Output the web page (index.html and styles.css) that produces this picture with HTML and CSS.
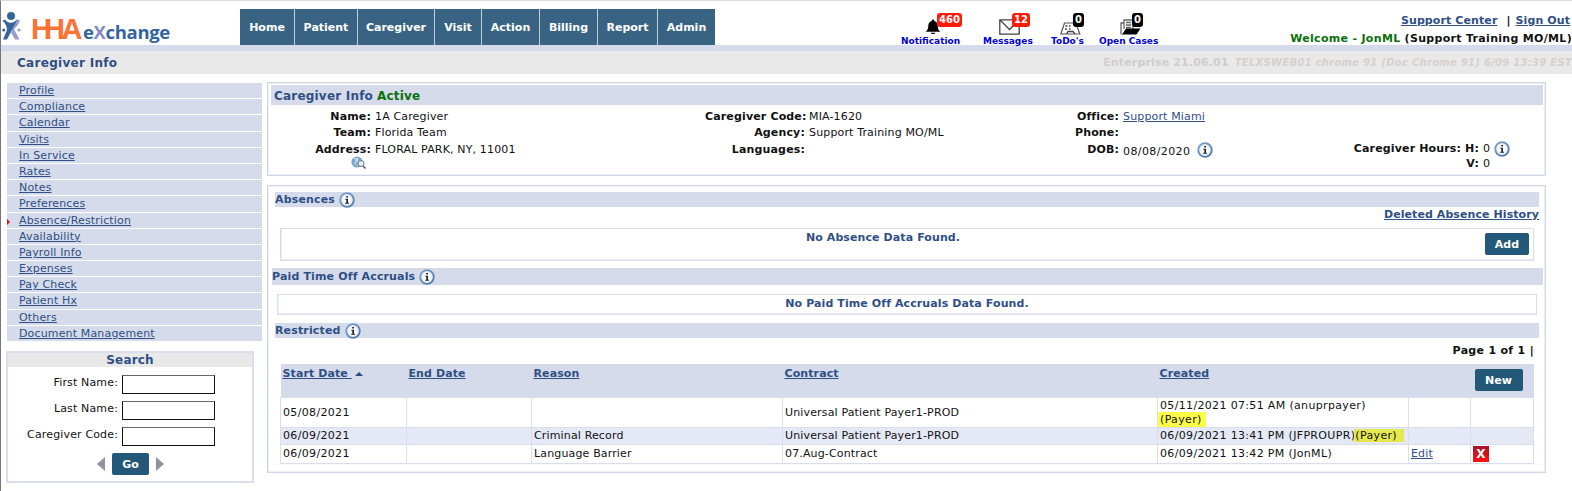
FILE: index.html
```html
<!DOCTYPE html>
<html lang="en">
  <head>
    <meta charset="UTF-8" />
    <meta name="viewport" content="width=device-width, initial-scale=1.0" />
    <title>Caregiver Info</title>
    <link rel="stylesheet" href="styles.css">
  </head>
  <body>
    <svg class="defs" width="0" height="0">
      <defs>
        <linearGradient id="infoRing" x1="0" y1="0" x2="1" y2="1">
          <stop offset="0" stop-color="#7fa3cc" />
          <stop offset="1" stop-color="#4d74a3" />
        </linearGradient>
        <radialGradient id="infoFill">
          <stop offset="0.4" stop-color="#ffffff" />
          <stop offset="1" stop-color="#d3e2f2" />
        </radialGradient>
        <symbol id="info" viewBox="0 0 16 16">
          <circle cx="8" cy="8" r="6.8" fill="url(#infoFill)" stroke="url(#infoRing)" stroke-width="1.8" />
          <path d="M7.2 4h1.8v1.6H7.2zM6.3 6.7H9v4h1v1H6.2v-1h1.1V7.7h-1z" fill="#222" />
        </symbol>
      </defs>
    </svg>

    <header class="header">
      <svg class="logo" width="172" height="35" viewBox="0 10 172 35">
        <circle cx="10" cy="16" r="4" fill="#33659c" />
        <path d="M1.500 20.500L4 19.500C6 23.500 13 24 15.500 19.500L18.500 20.500C17 24 15 26 14 27L11 30L6 39.500H2L6 30C6 26 4 23 1.500 20.500Z" fill="#33659c" />
        <path d="M12.500 28L18.500 39.500H14L10 32.500M15.500 20L19 20.500C18 24 15.500 27 13 29L12 27.500C13.500 25 15 23 15.500 20Z" fill="#9a9bce" />
        <circle cx="2.800" cy="30" r="1.600" fill="#33659c" />
        <circle cx="18" cy="30" r="1.600" fill="#9a9bce" />
        <text x="30 43 60.5" y="39" class="logo-hha">HHA</text>
        <text x="82" y="39" class="logo-name">e<tspan class="logo-x">X</tspan>change</text>
      </svg>
      <nav class="nav">
        <a class="nav-home">Home</a>
        <a class="nav-patient">Patient</a>
        <a class="nav-caregiver">Caregiver</a>
        <a class="nav-visit">Visit</a>
        <a class="nav-action">Action</a>
        <a class="nav-billing">Billing</a>
        <a class="nav-report">Report</a>
        <a class="nav-admin">Admin</a>
      </nav>
      <div class="alerts">
        <a class="alert alert-notification">
          <svg width="16" height="16" viewBox="0 0 16 16"><path d="M8 0.500C9 .5 9.300 1.200 9.300 2C12 2.700 12.700 5 12.800 7.500C12.900 10 13.500 11.300 15.500 12.800H.500C2.500 11.300 3.100 10 3.200 7.500C3.300 5 4 2.700 6.700 2C6.700 1.200 7 .5 8 .5ZM5.500 13.800H10.500C10 15.500 6 15.500 5.500 13.800Z" /></svg>
          <span class="badge red">460</span>
          <span>Notification</span>
        </a>
        <a class="alert alert-messages">
          <svg width="21" height="16" viewBox="0 0 21 16"><path d="M.8 .8H20.200V15.200H.8ZM.8 .8L10.500 10.500L20.200 .8" fill="#fff" stroke="#444" stroke-width="1.3" /></svg>
          <span class="badge red">12</span>
          <span>Messages</span>
        </a>
        <a class="alert alert-todo">
          <svg width="21" height="13" viewBox="0 0 21 13"><path d="M4.500 1H16L19.800 12H.8L3.500 4Z" fill="#fff" stroke="#555" stroke-width="1.200" /><path d="M5.500 4H7.500M5 7H7M9 7H10.500M9 4H10.500M6.500 12L8 9.500H13L15 12" fill="none" stroke="#444" stroke-width="1.300" /></svg>
          <span class="badge">0</span>
          <span>ToDo's</span>
        </a>
        <a class="alert alert-cases">
          <svg width="21" height="16" viewBox="0 0 21 16"><path d="M1 15.500V4H4V1H13V10M4 4V10M6 3.500H11M6 6H11M6 8.500H11" fill="none" stroke="#666" stroke-width="1.300" /><path d="M6 9.500H20.500L16.500 15.500H2Z" /></svg>
          <span class="badge">0</span>
          <span>Open Cases</span>
        </a>
      </div>
      <div class="account">
        <div class="account-links"><a class="support">Support Center</a><span class="bar">|</span><a class="signout">Sign Out</a></div>
        <div class="welcome"><span class="green">Welcome - JonML</span> (Support Training MO/ML)</div>
      </div>
    </header>

    <div class="titlebar">
      <h1>Caregiver Info</h1>
      <div class="version"><b>Enterprise 21.06.01</b><i>TELXSWEB01 chrome 91 (Doc Chrome 91) 6/09 13:39 EST</i></div>
    </div>

    <div class="page">
      <aside class="sidebar">
        <ul class="menu">
          <li><a>Profile</a></li>
          <li><a>Compliance</a></li>
          <li><a>Calendar</a></li>
          <li><a>Visits</a></li>
          <li><a>In Service</a></li>
          <li><a>Rates</a></li>
          <li><a>Notes</a></li>
          <li><a>Preferences</a></li>
          <li class="current"><a>Absence/Restriction</a></li>
          <li><a>Availability</a></li>
          <li><a>Payroll Info</a></li>
          <li><a>Expenses</a></li>
          <li><a>Pay Check</a></li>
          <li><a>Patient Hx</a></li>
          <li><a>Others</a></li>
          <li><a>Document Management</a></li>
        </ul>
        <form class="search">
          <h2>Search</h2>
          <div class="field"><label for="first">First Name:</label><input type="text" id="first" /></div>
          <div class="field"><label for="last">Last Name:</label><input type="text" id="last" /></div>
          <div class="field"><label for="code">Caregiver Code:</label><input type="text" id="code" /></div>
          <div class="search-go">
            <svg width="8" height="14" viewBox="0 0 8 14"><path d="M8 0V14L0 7Z" fill="#9290a3" /></svg>
            <button type="button">Go</button>
            <svg width="8" height="14" viewBox="0 0 8 14"><path d="M0 0V14L8 7Z" fill="#9290a3" /></svg>
          </div>
        </form>
      </aside>

      <main class="main">
        <section class="panel info-panel">
          <h2 class="bar-title">Caregiver Info <span class="green">Active</span></h2>
          <div class="info">
            <dl class="info-name">
              <dt>Name:</dt><dd>1A Caregiver</dd>
              <dt>Team:</dt><dd>Florida Team</dd>
              <dt>Address:</dt><dd>FLORAL PARK, NY, 11001</dd>
              <dt class="map"><svg width="15" height="13" viewBox="0 0 15 13"><circle cx="6" cy="6" r="5.600" fill="#7ea6c8" /><path d="M3 2.500L5 3V6L3.500 8M6.500 2V5L8.500 6M5.500 9H7" fill="none" stroke="#d8e8f4" stroke-width="1.100" /><circle cx="10" cy="7.500" r="3" fill="#e4edf5" stroke="#667788" /><path d="M12 10L14.500 12.500" stroke="#556" stroke-width="1.500" /></svg></dt><dd></dd>
            </dl>
            <dl class="info-code">
              <dt>Caregiver Code:</dt><dd>MIA-1620</dd>
              <dt>Agency:</dt><dd>Support Training MO/ML</dd>
              <dt>Languages:</dt><dd></dd>
            </dl>
            <dl class="info-office">
              <dt>Office:</dt><dd><a>Support Miami</a></dd>
              <dt>Phone:</dt><dd></dd>
              <dt>DOB:</dt><dd class="dob">08/08/2020 <svg width="16" height="16"><use href="#info" /></svg></dd>
            </dl>
            <dl class="info-hours">
              <dt>Caregiver Hours: H:</dt><dd>0 <svg width="16" height="16"><use href="#info" /></svg></dd>
              <dt>V:</dt><dd>0</dd>
            </dl>
          </div>
        </section>

        <section class="panel absence-panel">
          <h3 class="bar-sub">Absences <svg width="16" height="16"><use href="#info" /></svg></h3>
          <div class="history"><a>Deleted Absence History</a></div>
          <div class="empty absence-empty">
            <span>No Absence Data Found.</span>
            <button type="button">Add</button>
          </div>
          <h3 class="bar-sub pto-title">Paid Time Off Accruals <svg width="16" height="16"><use href="#info" /></svg></h3>
          <div class="empty pto-empty"><span>No Paid Time Off Accruals Data Found.</span></div>
          <h3 class="bar-sub">Restricted <svg width="16" height="16"><use href="#info" /></svg></h3>
          <div class="pager">Page 1 of 1 |</div>
          <table class="restricted">
            <colgroup>
              <col class="c-start" /><col class="c-end" /><col class="c-reason" /><col class="c-contract" />
              <col class="c-created" /><col class="c-edit" /><col class="c-delete" />
            </colgroup>
            <thead>
              <tr>
                <th><a class="sorted">Start Date <svg width="8" height="4" viewBox="0 0 8 4"><path d="M0 4L4 0L8 4Z" fill="#2b4a80" /></svg></a></th>
                <th><a>End Date</a></th>
                <th><a>Reason</a></th>
                <th><a>Contract</a></th>
                <th><a>Created</a></th>
                <th></th>
                <th><button type="button">New</button></th>
              </tr>
            </thead>
            <tbody>
              <tr class="tall">
                <td class="date">05/08/2021</td><td></td><td></td>
                <td>Universal Patient Payer1-PROD</td>
                <td class="date">05/11/2021 07:51 AM (anuprpayer)<br /><mark>(Payer)</mark></td>
                <td></td><td></td>
              </tr>
              <tr class="alt">
                <td class="date">06/09/2021</td><td></td>
                <td>Criminal Record</td>
                <td>Universal Patient Payer1-PROD</td>
                <td class="date">06/09/2021 13:41 PM (JFPROUPR)<mark>(Payer)</mark></td>
                <td></td><td></td>
              </tr>
              <tr class="last">
                <td class="date">06/09/2021</td><td></td>
                <td>Language Barrier</td>
                <td>07.Aug-Contract</td>
                <td class="date">06/09/2021 13:42 PM (JonML)</td>
                <td><a>Edit</a></td>
                <td><span class="delete">X</span></td>
              </tr>
            </tbody>
          </table>
        </section>
      </main>
    </div>
  </body>
</html>
```
FILE: styles.css
```css
* {
  box-sizing: border-box;
}

body {
  margin: 0;
  height: 491px;
  overflow: hidden;
  border-top: 1px solid #d9d9d9;
  border-left: 1px solid #777;
  background-color: #fff;
  color: #111;
  font-family: "DejaVu Sans", Verdana, sans-serif;
  font-size: 11px;
  letter-spacing: 0.15px;
}

h1,
h2,
h3,
ul,
dl,
dd {
  margin: 0;
  padding: 0;
}

a {
  color: #2f4f85;
  text-decoration: underline;
}

svg {
  display: block;
  flex: none;
}

.defs {
  position: absolute;
}

.green {
  color: #0a700a;
}

button {
  height: 22px;
  padding: 0;
  border: none;
  border-radius: 2px;
  background-color: #235878;
  color: #fff;
  font: bold 11px "DejaVu Sans", Verdana, sans-serif;
}

/* header */
.header {
  display: flex;
  height: 50px;
  border-bottom: 6px solid #d5dbea;
  letter-spacing: 0;
}

.logo {
  margin: 9px 67px 0 0;
}

.logo-hha {
  font: bold 29px "Liberation Sans", Arial, sans-serif;
  fill: #ff7233;
}

.logo-name {
  font: bold 18.5px "Open Sans", sans-serif;
  letter-spacing: -0.35px;
  fill: #33659c;
}

.logo-x {
  fill: #7f8cc0;
}

.nav {
  display: flex;
  gap: 1px;
  height: 36px;
  margin-top: 8px;
  background-color: #c3d0dc;
}

.nav a {
  background-color: #396383;
  color: #fff;
  font-weight: bold;
  line-height: 37px;
  text-align: center;
  text-decoration: none;
}

.nav-home { width: 54px; }
.nav-patient { width: 62px; }
.nav-caregiver { width: 76px; }
.nav-visit { width: 46px; }
.nav-action { width: 57px; }
.nav-billing { width: 57px; }
.nav-report { width: 59px; }
.nav-admin { width: 57px; }

.alerts {
  display: flex;
  height: 46px;
  margin-left: 186px;
}

.alert {
  position: relative;
  display: flex;
  flex-direction: column;
  justify-content: flex-end;
  color: #0000d8;
  font-size: 9px;
  font-weight: bold;
  line-height: 12px;
  text-decoration: none;
  white-space: nowrap;
}

.alert-notification { width: 82px; }
.alert-messages { width: 68px; }
.alert-todo { width: 48px; }
.alert-cases { width: 60px; }

.alert-notification svg { margin-left: 24px; }
.alert-messages svg { margin-left: 16px; }
.alert-todo svg { margin-left: 9px; }
.alert-cases svg { margin-left: 21px; }

.badge {
  position: absolute;
  top: 12px;
  height: 14px;
  padding: 0 2px;
  border-radius: 3px;
  background-color: #000;
  color: #fff;
  font-size: 10px;
  line-height: 14px;
}

.badge.red {
  background-color: #ff1a0a;
}

.alert-notification .badge { left: 36px; }
.alert-messages .badge { left: 29px; }
.alert-todo .badge { left: 22px; }
.alert-cases .badge { left: 33px; }

.account {
  margin-left: auto;
  font-weight: bold;
  text-align: right;
  white-space: nowrap;
}

.account-links {
  display: flex;
  justify-content: flex-end;
  margin-top: 11px;
  padding-right: 2px;
  letter-spacing: 0.1px;
  line-height: 18px;
}

.bar {
  margin: 0 5px 0 9px;
}

.welcome {
  letter-spacing: 0.31px;
  line-height: 18px;
}

/* title bar */
.titlebar {
  display: flex;
  justify-content: space-between;
  height: 23px;
  padding-left: 16px;
  background-color: #e9e9e9;
  line-height: 24px;
}

h1 {
  color: #2f4f85;
  font-size: 12px;
  letter-spacing: 0.3px;
}

.version {
  color: #cfcdce;
  font-size: 11px;
  font-weight: bold;
  white-space: nowrap;
}

.version i {
  margin-left: 6px;
  color: #d8cfd0;
  font-size: 10px;
  letter-spacing: 0.28px;
}

/* layout */
.page {
  display: flex;
  padding: 8px 26px 0 5px;
}

.sidebar {
  width: 256px;
  margin-right: 5px;
}

.main {
  flex: 1;
}

/* sidebar */
.menu {
  display: grid;
  grid-auto-rows: 1fr;
  gap: 1px;
  height: 258px;
  margin: 1px 0 0 1px;
  list-style: none;
}

.menu li {
  position: relative;
  padding-left: 12px;
  background-color: #d5dbea;
  line-height: 15px;
}

.menu .current::before {
  content: "";
  position: absolute;
  left: 0;
  top: 6px;
  border: 3px solid transparent;
  border-left-color: #d11;
  border-right-width: 0;
}

.search {
  width: 248px;
  height: 132px;
  margin-top: 10px;
  border: 2px solid #dadfed;
}

.search h2 {
  height: 14px;
  margin-bottom: 8px;
  background-color: #e9e9e9;
  color: #2f4f85;
  font-size: 12px;
  line-height: 15px;
  text-align: center;
}

.field {
  display: flex;
  justify-content: flex-end;
  gap: 4px;
  margin: 0 37px 7px 0;
  line-height: 15px;
}

.field input {
  width: 93px;
  height: 19px;
  padding: 0;
  border: 1px solid #111;
  border-top-color: #666;
}

.search-go {
  display: flex;
  align-items: center;
  gap: 7px;
  padding-left: 89px;
}

.search-go button {
  width: 37px;
}

/* panels */
.panel {
  border: 1px solid #cfd6e8;
  box-shadow: inset 0 0 0 1px #eef0f8;
}

.bar-title,
.bar-sub {
  display: flex;
  align-items: center;
  gap: 4px;
  background-color: #d5dbea;
  color: #2f4f85;
}

.bar-title {
  height: 20px;
  padding: 1px 0 0 3px;
  font-size: 12px;
  letter-spacing: 0.2px;
}

.info-panel {
  height: 94px;
  padding: 2px 2px 0 3px;
}

.info {
  display: flex;
  padding-top: 4px;
}

.info dl {
  display: grid;
  grid-auto-rows: 16.300px;
  column-gap: 4px;
  line-height: 16px;
  white-space: nowrap;
}

.info-name { grid-template-columns: 100px 330px; }
.info-code { grid-template-columns: 100px 210px; }
.info-office { grid-template-columns: 100px 210px; }
.info-hours { grid-template-columns: 146px 40px; }

dt {
  font-weight: bold;
  text-align: right;
}

.info .map {
  height: 13px;
}

.map svg {
  margin: -2px 0 0 80px;
}

.dob,
.info-hours dd {
  display: flex;
  gap: 4px;
}

.info .dob {
  gap: 7px;
  letter-spacing: 0.4px;
  line-height: 19px;
}

.info .info-hours {
  grid-auto-rows: 15px;
  padding-top: 32px;
}

.absence-panel {
  height: 288px;
  margin-top: 9px;
  padding: 6px 6px 0 7px;
}

.bar-sub {
  height: 15px;
  font-size: 11px;
}

.history {
  height: 21px;
  font-weight: bold;
  letter-spacing: 0.08px;
  line-height: 16px;
  text-align: right;
}

.empty {
  border: 1px solid #d9deec;
  box-shadow: inset 1px -1px 0 #e8ebf4;
  color: #2f4f85;
  font-weight: bold;
  letter-spacing: 0.1px;
  text-align: center;
}

.absence-empty {
  display: flex;
  justify-content: center;
  height: 33px;
  margin: 0 5px 7px 5px;
  line-height: 18px;
}

.absence-empty span {
  flex: 1;
}

.absence-empty button {
  width: 44px;
  margin: 4px 4px 0 0;
}

.pto-title {
  height: 17px;
  margin: 0 -4px 9px -3px;
}

.pto-empty {
  height: 21px;
  margin: 0 2px 8px 2px;
  line-height: 18px;
}

.pager {
  height: 26px;
  padding-right: 5px;
  font-weight: bold;
  letter-spacing: 0.3px;
  line-height: 25px;
  text-align: right;
}

/* restricted table */
.restricted {
  width: 1254px;
  margin-left: 5px;
  border-collapse: collapse;
  table-layout: fixed;
}

.c-start { width: 126px; }
.c-end { width: 125px; }
.c-reason { width: 251px; }
.c-contract { width: 375px; }
.c-created { width: 251px; }
.c-edit { width: 62px; }

.restricted th {
  height: 33px;
  padding: 3px 2px 0;
  background-color: #d5dbea;
  letter-spacing: 0.1px;
  line-height: 14px;
  text-align: left;
  vertical-align: top;
}

.sorted svg {
  display: inline-block;
  margin: 0 0 1px 3px;
}

.restricted th button {
  display: block;
  width: 48px;
  margin: 2px 0 0 2px;
}

.restricted td {
  height: 17px;
  padding: 1px 2px 0;
  border: 1px solid #d9deec;
  line-height: 14px;
  white-space: nowrap;
}

.restricted .date {
  letter-spacing: 0.34px;
}

.restricted .tall td {
  height: 30px;
}

.restricted .alt td {
  background-color: #e5e9f5;
}

.restricted .last td {
  height: 19px;
}

mark {
  padding: 1px 4px 1px 2px;
  margin-left: -2px;
  background-color: #ffff45;
  color: #111;
}

.alt mark {
  margin-left: -1px;
  padding: 0 7px 0 1px;
  background-color: #e6e94e;
}

.delete {
  display: block;
  width: 16px;
  height: 16px;
  background: linear-gradient(#a8142c, #ff1111);
  color: #fff;
  font-weight: bold;
  font-size: 12px;
  line-height: 16px;
  text-align: center;
}
```
